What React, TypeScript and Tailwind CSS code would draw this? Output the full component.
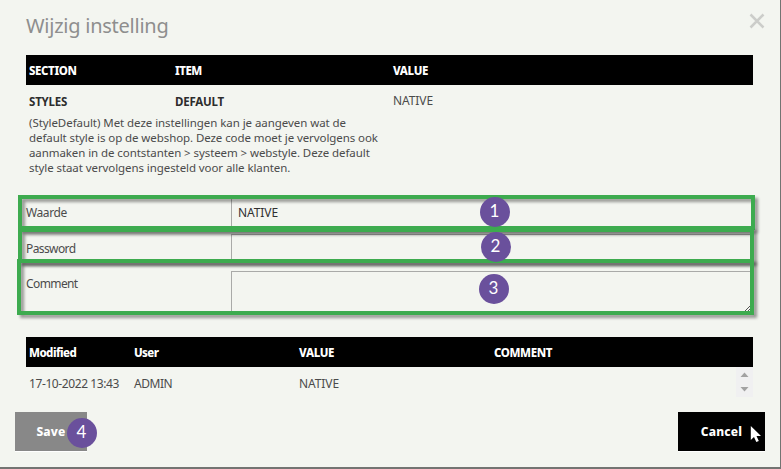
import type { ReactNode } from 'react';

function Marker({ place, children }: { place: string; children: ReactNode }) {
  return (
    <span className={`absolute flex size-[30px] items-center justify-center rounded-full bg-[#6a509c] pb-[2px] font-[Lato,sans-serif] text-[17px] leading-none text-white ${place}`}>
      {children}
    </span>
  );
}

function Frame({ place }: { place: string }) {
  return <div className={`pointer-events-none absolute border-4 border-[#3dab4f] drop-shadow-[3px_3px_1.5px_rgba(0,0,0,0.38)] ${place}`} />;
}

export default function App() {
  return (
    <div className="relative flex h-[469px] w-[781px] flex-col overflow-hidden border-r border-b-2 border-[#737472] bg-[#f3f5f0] font-['Noto_Sans',sans-serif] text-[12px] leading-[15px] text-[#4b4b4b]">
      <header className="flex h-[55px] shrink-0 justify-between pl-[26px] pr-[15px]">
        <h1 className="pt-[13px] text-[20px] leading-[26px] tracking-[-0.25px] text-[#8e8e8e]">Wijzig instelling</h1>
        <svg className="mt-[13px] size-[16px]" viewBox="0 0 16 16" stroke="#cccdca" strokeWidth="2.5" fill="none">
          <path d="M1.5 1.5l13 13M14.5 1.5l-13 13" />
        </svg>
      </header>

      <section className="ml-[26px] w-[727px]">
        <div className="grid h-[30px] grid-cols-[146px_218px_1fr] items-center bg-black pl-[3px] pt-px text-[11.5px] font-extrabold text-white">
          <span className="tracking-[-0.4px]">SECTION</span>
          <span className="tracking-[-0.5px]">ITEM</span>
          <span className="tracking-[-0.4px]">VALUE</span>
        </div>
        <div className="grid h-[30px] grid-cols-[146px_218px_1fr] items-center pl-[3px] pt-px">
          <b className="pt-px text-[11.5px] tracking-[-0.2px] text-[#2d2d2d]">STYLES</b>
          <b className="pt-px text-[11.5px] tracking-[-0.2px] text-[#2d2d2d]">DEFAULT</b>
          <span className="tracking-[-0.1px]">NATIVE</span>
        </div>
        <p className="whitespace-nowrap pl-[3px] text-[11.5px] tracking-[-0.08px]">
          <span className="block tracking-[-0.06px]">(StyleDefault) Met deze instellingen kan je aangeven wat de</span>
          <span className="block">default style is op de webshop. Deze code moet je vervolgens ook</span>
          <span className="block">aanmaken in de contstanten &gt; systeem &gt; webstyle. Deze default</span>
          <span className="block">style staat vervolgens ingesteld voor alle klanten.</span>
        </p>
      </section>

      <section className="ml-[26px] mt-[23px] flex w-[727px] flex-col">
        <div className="flex h-[30px]">
          <span className="w-[205px] pt-[7px] tracking-[-0.4px]">Waarde</span>
          <div className="flex-1 border border-[#a9aaa8] pl-[6px] pt-[6px] tracking-[-0.1px] text-[#303030]">NATIVE</div>
        </div>
        <div className="mt-[6px] flex h-[27px]">
          <span className="w-[205px] pt-[7px] tracking-[-0.6px]">Password</span>
          <div className="flex-1 border border-[#a9aaa8]" />
        </div>
        <div className="mt-[10px] flex h-[41px]">
          <span className="w-[205px] pt-[5px] tracking-[-0.6px]">Comment</span>
          <div className="flex flex-1 items-end justify-end border border-[#a9aaa8]">
            <svg className="mr-px size-[6px]" viewBox="0 0 6 6" stroke="#555" fill="none"><path d="M0 6L6 0M3 6L6 3" /></svg>
          </div>
        </div>
      </section>

      <section className="ml-[26px] mt-[25px] w-[727px]">
        <div className="grid h-[30px] grid-cols-[105px_165px_195px_1fr] items-center bg-black pl-[3px] pt-px text-[11.5px] font-extrabold text-white">
          <span className="tracking-[-0.55px]">Modified</span>
          <span className="tracking-[-0.6px]">User</span>
          <span className="tracking-[-0.35px]">VALUE</span>
          <span className="tracking-[-0.4px]">COMMENT</span>
        </div>
        <div className="flex h-[30px]">
          <div className="grid flex-1 grid-cols-[105px_165px_1fr] items-center pl-[3px] pt-[2px]">
            <span className="whitespace-nowrap tracking-[-0.4px]">17-10-2022 13:43</span>
            <span className="tracking-[-0.45px]">ADMIN</span>
            <span className="tracking-[-0.1px]">NATIVE</span>
          </div>
          <svg className="h-[30px] w-[17px] bg-[#f0f0f1]" viewBox="0 0 17 30" fill="#a2a2a2">
            <path d="M4.5 10L8.5 5.5L12.5 10ZM4.5 20L8.5 24.5L12.5 20Z" />
          </svg>
        </div>
      </section>

      <footer className="mt-[15px] flex justify-between pl-[15px] pr-[15px] text-[12px] font-extrabold tracking-[0.2px] text-white">
        <button className="h-[40px] w-[72px] border-b border-white bg-[#888]">Save</button>
        <button className="h-[40px] w-[87px] border-b border-white bg-black">Cancel</button>
      </footer>

      <Frame place="left-[18px] top-[195px] h-[35px] w-[737px]" />
      <Frame place="left-[18px] top-[228px] h-[35px] w-[736px]" />
      <Frame place="left-[17px] top-[259px] h-[56px] w-[737px]" />
      <Marker place="left-[479.5px] top-[196.5px]">1</Marker>
      <Marker place="left-[480.5px] top-[231.5px]">2</Marker>
      <Marker place="left-[478.5px] top-[273.5px]">3</Marker>
      <Marker place="left-[66.5px] top-[417.5px]">4</Marker>
      <svg className="absolute left-[750px] top-[425px] h-[18px] w-[12px]" viewBox="0 0 12 18" fill="white">
        <path d="M.8 1V15L4 12L6.3 17L8.8 16L6.5 11H11Z" />
      </svg>
    </div>
  );
}
